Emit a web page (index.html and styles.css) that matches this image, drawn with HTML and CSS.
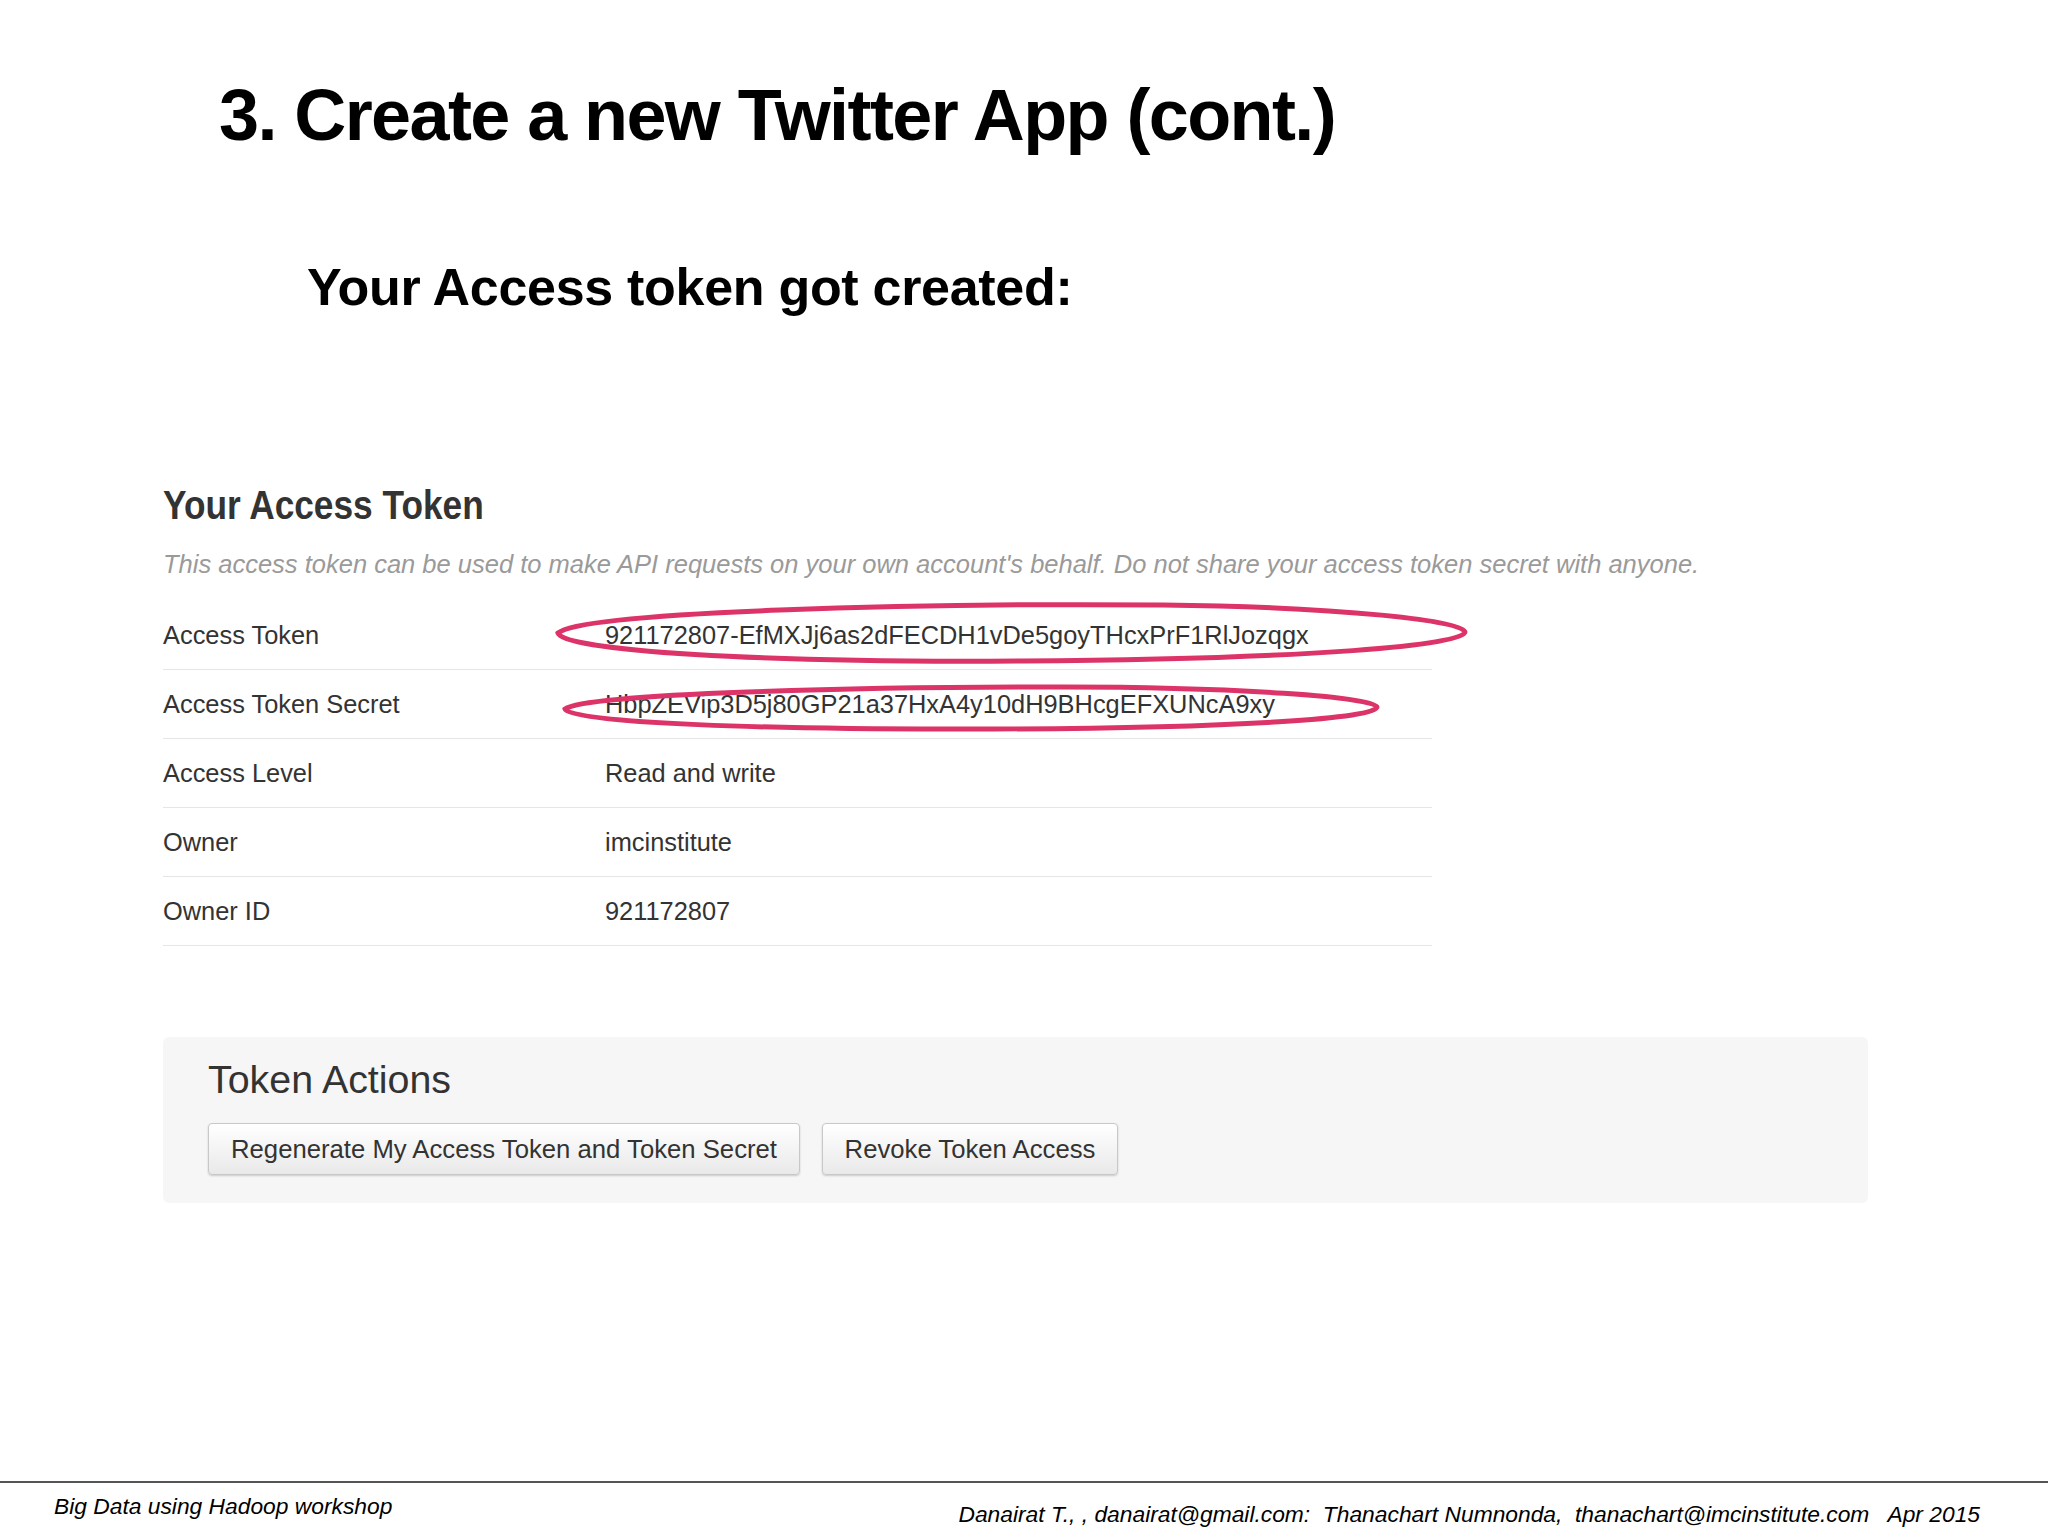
FILE: index.html
```html
<!DOCTYPE html>
<html lang="en">
<head>
<meta charset="utf-8">
<title>3. Create a new Twitter App (cont.)</title>
<link rel="stylesheet" href="styles.css">
</head>
<body>
<div class="slide">
  <h1 class="title">3. Create a new Twitter App (cont.)</h1>
  <h2 class="subtitle">Your Access token got created:</h2>

  <section class="shot">
    <h3 class="shot-title"><span class="shot-title-text">Your Access Token</span></h3>
    <p class="shot-desc">This access token can be used to make API requests on your own account's behalf. Do not share your access token secret with anyone.</p>

    <div class="token-table">
      <svg class="marks" width="1400" height="150" viewBox="0 0 1400 150" aria-hidden="true">
        <path class="mark" d="M395 32 C 420 10, 760 2, 1000 4 C 1180 6, 1302 20, 1302 31 C 1302 44, 1150 58, 860 60 C 600 62, 400 50, 395 32 Z"/>
        <path class="mark" d="M402 108 C 425 92, 700 86, 900 86 C 1070 86, 1214 96, 1214 106 C 1214 117, 1080 127, 830 128 C 610 129, 405 122, 402 108 Z"/>
      </svg>
      <div class="row"><span class="label">Access Token</span><span class="value">921172807-EfMXJj6as2dFECDH1vDe5goyTHcxPrF1RlJozqgx</span></div>
      <div class="row"><span class="label">Access Token Secret</span><span class="value">HbpZEVip3D5j80GP21a37HxA4y10dH9BHcgEFXUNcA9xy</span></div>
      <div class="row"><span class="label">Access Level</span><span class="value">Read and write</span></div>
      <div class="row"><span class="label">Owner</span><span class="value">imcinstitute</span></div>
      <div class="row"><span class="label">Owner ID</span><span class="value">921172807</span></div>
    </div>

    <div class="actions">
      <h4 class="actions-title">Token Actions</h4>
      <div class="btns">
        <button class="btn btn-wide" type="button">Regenerate My Access Token and Token Secret</button>
        <button class="btn btn-revoke" type="button">Revoke Token Access</button>
      </div>
    </div>
  </section>

  <footer class="footer">
    <div class="footer-line"></div>
    <div class="footer-text">
      <span class="foot-left">Big Data using Hadoop workshop</span>
      <span class="foot-right">Danairat T., , danairat@gmail.com:  Thanachart Numnonda,  thanachart@imcinstitute.com   Apr 2015</span>
    </div>
  </footer>
</div>
</body>
</html>
```

FILE: styles.css
```css
html, body {
  margin: 0;
  padding: 0;
  background: #ffffff;
}

.slide {
  width: 2048px;
  height: 1536px;
  display: flex;
  flex-direction: column;
  font-family: "Liberation Sans", Arial, sans-serif;
  color: #000;
  overflow: hidden;
}

.title {
  margin: 0;
  padding: 79px 0 0 219px;
  font-size: 72px;
  line-height: 72px;
  font-weight: bold;
  letter-spacing: -1.6px;
}

.subtitle {
  margin: 110px 0 0 307px;
  font-size: 52px;
  line-height: 52px;
  font-weight: bold;
  letter-spacing: -0.3px;
}

.shot {
  margin: 0;
  padding-left: 163px;
  color: #333;
}

.shot-title {
  margin: 172px 0 0 0;
  font-size: 41px;
  line-height: 41px;
  font-weight: bold;
  color: #333;
}

.shot-title-text {
  display: inline-block;
  transform: scaleX(0.86);
  transform-origin: left center;
}

.shot-desc {
  margin: 26px 0 0 0;
  font-size: 25.5px;
  line-height: 24px;
  font-style: italic;
  color: #9a9a9a;
}

.token-table {
  position: relative;
  margin-top: 25px;
  width: 1269px;
}

.marks {
  position: absolute;
  left: 0;
  top: 0;
  overflow: visible;
  pointer-events: none;
}

.mark {
  fill: none;
  stroke: #dc3368;
  stroke-width: 5;
}

.row {
  display: flex;
  align-items: center;
  height: 68px;
  border-bottom: 1px solid #e6e6e6;
  font-size: 25.4px;
  color: #333;
}

.label {
  width: 442px;
  flex: none;
}

.value {
  flex: 1;
}

.actions {
  margin-top: 91px;
  width: 1705px;
  height: 166px;
  box-sizing: border-box;
  padding: 22px 0 0 45px;
  background: #f6f6f6;
  border-radius: 6px;
}

.actions-title {
  margin: 0;
  font-size: 39.4px;
  line-height: 40px;
  font-weight: normal;
  color: #333;
}

.btns {
  display: flex;
  gap: 22px;
  margin-top: 24px;
}

.btn {
  height: 52px;
  box-sizing: border-box;
  padding: 0;
  text-align: center;
  font-family: "Liberation Sans", Arial, sans-serif;
  font-size: 25.7px;
  color: #333;
  background: linear-gradient(#ffffff, #e9e9e9);
  border: 1px solid #c8c8c8;
  border-radius: 4px;
  box-shadow: 0 1px 2px rgba(0, 0, 0, 0.18);
}

.btn-wide {
  width: 592px;
}

.btn-revoke {
  width: 296px;
}

.footer {
  margin-top: auto;
  height: 55px;
}

.footer-line {
  height: 2px;
  background: #555;
}

.footer-text {
  display: flex;
  justify-content: space-between;
  padding: 10px 68px 0 54px;
  font-size: 22.8px;
  font-style: italic;
  color: #000;
}

.foot-left {
  line-height: 26px;
}

.foot-right {
  white-space: pre;
  line-height: 26px;
  padding-top: 8px;
}
```
